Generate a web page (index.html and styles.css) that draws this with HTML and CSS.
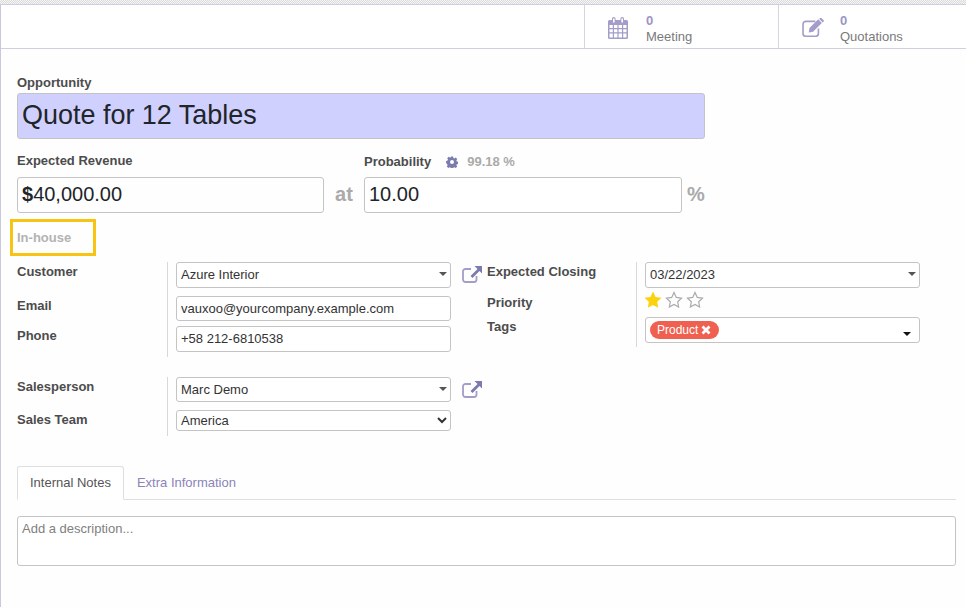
FILE: index.html
```html
<!DOCTYPE html>
<html lang="en">
<head>
<meta charset="utf-8">
<title>Quote for 12 Tables</title>
<link rel="stylesheet" href="styles.css">
</head>
<body>
<div class="hatch"></div>
<main class="sheet">
  <div class="button-box">
    <a class="stat">
      <svg class="stat-icon" viewBox="0 0 20 22" width="20" height="22"><path fill="#a29dc9" fill-rule="evenodd" d="M1.500 3H4V1.800a1.800 1.800 0 0 1 3.600 0V3h4.800V1.800a1.800 1.800 0 0 1 3.600 0V3h2.500A1.500 1.500 0 0 1 20 4.500v16a1.500 1.500 0 0 1-1.500 1.500h-17A1.500 1.500 0 0 1 0 20.500v-16A1.500 1.500 0 0 1 1.500 3zM5 1.500V5.500h1.600V1.500zM13.400 1.500V5.500H15V1.500zM1.500 8v3h3.300V8zM6 8v3h3.400V8zM10.600 8v3H14V8zM15.200 8v3h3.300V8zM1.500 12.200v3h3.300v-3zM6 12.200v3h3.400v-3zM10.600 12.200v3H14v-3zM15.200 12.200v3h3.300v-3zM1.500 16.400v4h3.300v-4zM6 16.400v4h3.400v-4zM10.600 16.400v4H14v-4zM15.200 16.400v4h3.300v-4z"/></svg>
      <span class="stat-text"><b class="stat-value">0</b><span>Meeting</span></span>
    </a>
    <a class="stat stat-quote">
      <svg class="stat-icon" viewBox="0 0 23 20" width="22" height="19"><path fill="none" stroke="#a29dc9" stroke-width="1.700" d="M14 3.500H4A3 3 0 0 0 1 6.500v9.700a3 3 0 0 0 3 3h10.200a3 3 0 0 0 3-3V11"/><path fill="#a29dc9" d="M7 15.300l.8-4.700L17 1.400l3.800 3.800-9.200 9.200zM18 .9l1-.9a1 1 0 0 1 1.300 0l2.400 2.400a1 1 0 0 1 0 1.300l-1 1z"/></svg>
      <span class="stat-text"><b class="stat-value">0</b><span>Quotations</span></span>
    </a>
  </div>

  <div class="content">
    <label class="label title-label">Opportunity</label>
    <input class="field title-input" value="Quote for 12 Tables" aria-label="Opportunity">

    <div class="money-row">
      <div class="money-col">
        <label class="label">Expected Revenue</label>
        <div class="big-field revenue-field"><b>$</b>40,000.00</div>
      </div>
      <span class="unit unit-at">at</span>
      <div class="money-col prob-col">
        <div class="prob-head">
          <label class="label">Probability</label>
          <svg class="gear" viewBox="0 0 12 12" width="12" height="12"><path fill="#7c7bad" fill-rule="evenodd" d="M4.900.5h2.200l.3 1.500 1 .4 1.300-.8 1.500 1.500-.8 1.300.4 1 1.500.3v2.200l-1.500.3-.4 1 .8 1.300-1.500 1.500-1.300-.8-1 .4-.3 1.500H4.900l-.3-1.500-1-.4-1.300.8-1.500-1.500.8-1.300-.4-1L.1 7.100V4.900l1.500-.3.400-1-.8-1.300 1.500-1.500 1.300.8 1-.4zM6 4a2 2 0 1 0 0 4 2 2 0 0 0 0-4z"/></svg>
          <span class="prob-value">99.18 %</span>
        </div>
        <input class="field big-field prob-field" value="10.00" aria-label="Probability">
      </div>
      <span class="unit unit-pct">%</span>
    </div>

    <div class="highlight"><span class="muted-label">In-house</span></div>

    <div class="form-top">
      <div class="group">
        <div class="labels labels-customer">
          <label class="label">Customer</label>
          <label class="label">Email</label>
          <label class="label">Phone</label>
        </div>
        <div class="fields">
          <div class="field combo">Azure Interior<i class="caret"></i></div>
          <input class="field text-input email-input" value="vauxoo@yourcompany.example.com" aria-label="Email">
          <input class="field text-input phone-input" value="+58 212-6810538" aria-label="Phone">
        </div>
      </div>
      <svg class="ext" width="20" height="17"><use href="#ext-link"/></svg>
      <div class="group">
        <div class="labels labels-closing">
          <label class="label">Expected Closing</label>
          <label class="label">Priority</label>
          <label class="label">Tags</label>
        </div>
        <div class="fields">
          <div class="field combo">03/22/2023<i class="caret"></i></div>
          <div class="stars">
            <svg viewBox="0 0 18 17" width="18" height="17"><path fill="#fcd20f" d="M9 .5l2.600 5.400 5.900.8-4.300 4.100 1 5.900L9 13.900l-5.200 2.800 1-5.900L.5 6.700l5.900-.8z"/></svg>
            <svg viewBox="0 0 18 17" width="18" height="17"><path fill="none" stroke="#aaa" stroke-width="1.200" d="M9 1.500l2.300 4.900 5.200.7-3.800 3.700.9 5.200L9 13.500l-4.600 2.500.9-5.200-3.800-3.700 5.200-.7z"/></svg>
            <svg viewBox="0 0 18 17" width="18" height="17"><path fill="none" stroke="#aaa" stroke-width="1.200" d="M9 1.500l2.300 4.900 5.200.7-3.800 3.700.9 5.200L9 13.500l-4.600 2.500.9-5.200-3.800-3.700 5.200-.7z"/></svg>
          </div>
          <div class="field combo tags">
            <span class="tag">Product <svg viewBox="0 0 10 10" width="10" height="10"><path stroke="#fff" stroke-width="2.800" d="M1.500 1.500l7 7M8.500 1.500l-7 7"/></svg></span>
            <i class="caret caret-dark"></i>
          </div>
        </div>
      </div>
    </div>

    <div class="form-bottom">
      <div class="group">
        <div class="labels labels-sales">
          <label class="label">Salesperson</label>
          <label class="label">Sales Team</label>
        </div>
        <div class="fields">
          <div class="field combo combo-short">Marc Demo<i class="caret"></i></div>
          <select class="field team-select" aria-label="Sales Team"><option>America</option></select>
        </div>
      </div>
      <svg class="ext" width="20" height="17"><use href="#ext-link"/></svg>
    </div>

    <nav class="tabs">
      <a class="tab tab-active">Internal Notes</a>
      <a class="tab">Extra Information</a>
    </nav>
    <div class="field description">Add a description...</div>
  </div>
</main>
<svg class="defs" width="0" height="0" aria-hidden="true">
  <symbol id="ext-link" viewBox="0 0 20 17">
    <path fill="none" stroke="#a29dc9" stroke-width="1.800" d="M9 3H3.500A2.500 2.500 0 0 0 1 5.500v8A2.500 2.500 0 0 0 3.500 16H12a2.500 2.500 0 0 0 2.500-2.500V10"/>
    <path fill="#7c7bad" d="M12.500 0H20v7.500l-2.500-2.500-7 7-2-2 7-7z"/>
  </symbol>
</svg>
</body>
</html>
```
FILE: styles.css
```css
* { box-sizing: border-box; }
html, body { margin: 0; height: 100%; }
body {
  width: 966px;
  height: 607px;
  overflow: hidden;
  background: #fff;
  font-family: "Liberation Sans", Arial, sans-serif;
  font-size: 13px;
  color: #333;
}
.hatch {
  height: 4px;
  background-color: #f0f0f0;
  background-image: repeating-conic-gradient(#dcdcdc 0 25%, #f4f4f4 0 50%);
  background-size: 2px 2px;
}
.sheet {
  height: 603px;
  border-top: 1px solid #cfcfe0;
  border-left: 1px solid #c9c8dc;
  background: #fefefe;
}
.button-box {
  display: flex;
  justify-content: flex-end;
  height: 44px;
  border-bottom: 1px solid #cfcfe0;
  background: #fff;
}
.stat {
  display: flex;
  align-items: flex-start;
  width: 194px;
  border-left: 1px solid #d6d6e2;
  padding-left: 23px;
  color: #7a7a7a;
  line-height: 15px;
}
.stat-quote { width: 188px; }
.stat-icon { margin-top: 12px; flex: none; }
.stat-quote .stat-icon { margin-top: 13px; }
.stat-text { display: flex; flex-direction: column; gap: 1px; margin: 8px 0 0 18px; }
.stat-quote .stat-text { margin-left: 16px; }
.stat-value { color: #9a96c4; font-size: 13px; }
.content { padding: 26px 10px 0 16px; }
.label {
  display: block;
  font-weight: 700;
  color: #4c4c4c;
  line-height: 15px;
}
.field {
  display: block;
  border: 1px solid #c4c4c4;
  border-radius: 3px;
  background: #fff;
  font: inherit;
  color: #333;
  outline: none;
}
.title-label { margin-bottom: 3px; }
.title-input {
  width: 688px;
  height: 46px;
  padding: 0 4px 2px;
  background: #d0d0ff;
  font-size: 26.96px;
  color: #212529;
}
.money-row { display: flex; align-items: flex-end; margin-top: 14px; }
.money-col { display: flex; flex-direction: column; }
.money-col .label { margin-bottom: 9px; }
.prob-col .label { margin-bottom: 8px; }
.big-field {
  height: 36px;
  border: 1px solid #c4c4c4;
  border-radius: 3px;
  padding: 0 4px 2px;
  font-size: 20px;
  line-height: 32px;
  color: #212529;
}
.revenue-field { width: 307px; }
.prob-field { width: 318px; }
.prob-head { display: flex; align-items: flex-start; }
.gear { margin: 2px 0 0 15px; }
.prob-value { margin-left: 9px; font-weight: 700; color: #aaa; line-height: 15px; }
.unit {
  font-size: 20px;
  font-weight: 700;
  color: #aaa;
  line-height: 34px;
  height: 36px;
}
.unit-at { width: 40px; text-align: center; }
.unit-pct { margin-left: 5px; }
.highlight {
  width: 86px;
  height: 37px;
  margin: 6px 0 6px -7px;
  padding-left: 4px;
  border: 3px solid #f7c413;
  line-height: 31px;
}
.muted-label { font-weight: 700; color: #b3b3b3; }
.form-top, .form-bottom { display: flex; align-items: flex-start; }
.form-bottom { margin-top: 20px; }
.group { display: flex; }
.labels { width: 151px; border-right: 1px solid #d8d8d8; display: flex; flex-direction: column; padding-top: 2px; }
.fields { width: 283px; padding-left: 8px; display: flex; flex-direction: column; }
.labels-customer { height: 95px; gap: 19px; }
.labels-customer .label:last-child { margin-top: -4px; }
.labels-sales { height: 59px; gap: 18px; }
.labels-closing { width: 150px; height: 85px; gap: 16px; }
.labels-closing .label:last-child { margin-top: -7px; }
.combo {
  position: relative;
  height: 26px;
  padding: 0 4px;
  line-height: 24px;
}
.combo-short { height: 25px; line-height: 23px; }
.text-input { width: 100%; height: 25px; padding: 0 4px; }
.email-input { margin: 8px 0 5px; }
.phone-input { height: 26px; padding-bottom: 2px; }
.caret {
  position: absolute;
  right: 3px;
  top: 9px;
  width: 0;
  height: 0;
  border: 4px solid transparent;
  border-top-color: #555;
  border-bottom: 0;
}
.caret-dark { border-top-color: #111; top: 14px; right: 8px; }
.ext { margin: 4px 5px 0 11px; flex: none; }
.stars { display: flex; height: 29px; padding-top: 3px; gap: 3px; margin-left: -1px; }
.stars svg { display: block; }
.tags { display: flex; align-items: flex-start; height: 26px; padding: 3px 4px; }
.tag {
  display: inline-flex;
  align-items: center;
  gap: 3px;
  width: 69px;
  height: 18px;
  padding: 0 7px;
  border-radius: 9px;
  background: #ef6050;
  color: #fff;
  font-size: 12px;
  line-height: 18px;
}
.team-select {
  width: 100%;
  height: 21px;
  margin-top: 8px;
  padding: 0;
}
.tabs {
  display: flex;
  height: 34px;
  margin-top: 30px;
  border-bottom: 1px solid #dedede;
}
.tab {
  height: 34px;
  padding: 0 12px;
  line-height: 32px;
  color: #8a84b8;
  border: 1px solid transparent;
}
.tab-active {
  border-color: #dedede #dedede #fff;
  border-radius: 3px 3px 0 0;
  background: #fff;
  color: #555;
}
.description {
  width: 939px;
  height: 50px;
  margin-top: 16px;
  padding: 4px;
  color: #808080;
  line-height: 15px;
}
.defs { position: absolute; }
```
